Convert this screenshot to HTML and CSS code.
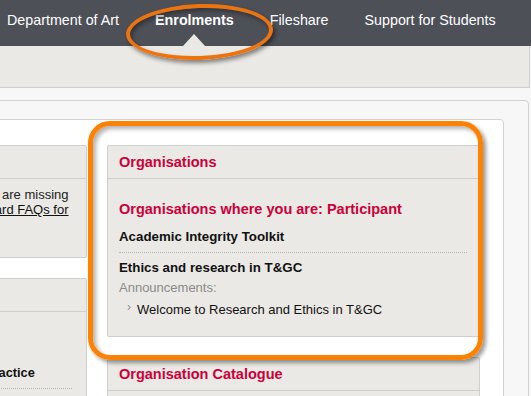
FILE: index.html
```html
<!DOCTYPE html>
<html lang="en">
<head>
    <meta charset="UTF-8">
    <meta name="viewport" content="width=device-width, initial-scale=1.0">
    <title>Enrolments</title>
    <link rel="stylesheet" href="styles.css">
</head>
<body>

    <div class="topnav">
        <a class="nav-item">Department of Art</a>
        <a class="nav-item active">Enrolments</a>
        <a class="nav-item">Fileshare</a>
        <a class="nav-item">Support for Students</a>
    </div>

    <div class="band"></div>

    <div class="main">
        <div class="content">
            <div class="col">
                <div class="card">
                    <div class="card-head"><h2>Notices</h2></div>
                    <div class="card-body notice">
                        your courses are missing<br>
                        see <a href="#">Blackboard FAQs for</a><br>
                        <a href="#">help</a>
                    </div>
                </div>
                <div class="card">
                    <div class="card-head"><h2>Modules</h2></div>
                    <div class="card-body courses">
                        <h3>Courses</h3>
                        <ul class="org-list">
                            <li><strong>Academic Practice</strong></li>
                            <li><strong>Induction</strong></li>
                        </ul>
                    </div>
                </div>
            </div>

            <div class="col">
                <div class="card">
                    <div class="card-head"><h2>Organisations</h2></div>
                    <div class="card-body">
                        <h3>Organisations where you are: Participant</h3>
                        <ul class="org-list">
                            <li><strong>Academic Integrity Toolkit</strong></li>
                            <li>
                                <strong>Ethics and research in T&amp;GC</strong>
                                <div class="ann-label">Announcements:</div>
                                <ul class="ann-list">
                                    <li>Welcome to Research and Ethics in T&amp;GC</li>
                                </ul>
                            </li>
                        </ul>
                    </div>
                </div>
                <div class="card">
                    <div class="card-head"><h2>Organisation Catalogue</h2></div>
                    <div class="card-body">
                        <ul class="org-list">
                            <li><strong>Browse</strong></li>
                        </ul>
                    </div>
                </div>
            </div>
        </div>
    </div>

    <!-- callouts drawn over the screenshot -->
    <div class="ring"></div>
    <div class="callout"></div>

</body>
</html>
```

FILE: styles.css
```css
/* page */
* {
    box-sizing: border-box;
}

body {
    margin: 0;
    background: #f7f7f7;
    font-family: "Liberation Sans", Arial, sans-serif;
    font-size: 13px;
    color: #111;
    overflow: hidden;
    height: 396px;
    position: relative;
}

/* top navigation */
.topnav {
    display: flex;
    gap: 36px;
    height: 46px;
    padding-left: 7px;
    background: #4e5058;
}

.nav-item {
    position: relative;
    color: #fff;
    font-size: 14.3px;
    line-height: 40px;
    text-decoration: none;
    white-space: nowrap;
}

.nav-item.active {
    font-weight: bold;
}

/* little notch under the active tab */
.nav-item.active::after {
    content: "";
    position: absolute;
    left: 50%;
    top: 34px;
    margin-left: -11px;
    border-left: 11px solid transparent;
    border-right: 11px solid transparent;
    border-bottom: 12px solid #ebe9e5;
}

.band {
    width: 530px;
    height: 42px;
    background: #ebe9e5;
    border-right: 1px solid #cfcfcf;
    border-bottom: 1px solid #cfcfcf;
}

/* content panels */
.main {
    width: 639px;
    margin: 12px 0 0 -110px;
    padding: 18px 24px 0 0;
    background: #f7f7f7;
    border: 1px solid #d2d2d2;
    border-radius: 0 4px 0 0;
}

.content {
    display: grid;
    grid-template-columns: minmax(0, 1fr) 373px;
    gap: 20px;
    min-height: 320px;
    padding: 25px 23px 0 20px;
    background: #fff;
    border: 1px solid #d2d2d2;
    border-radius: 0 4px 0 0;
}

.col {
    min-width: 0;
}

.card {
    background: #ebe9e5;
    border: 1px solid #cfcfcf;
    border-radius: 2px;
    margin-bottom: 20px;
    overflow: hidden;
}

.card-head {
    padding: 6px 11px;
    border-bottom: 1px solid #cfcfcf;
}

h2, h3 {
    margin: 0;
    font-size: 14.5px;
    line-height: 20px;
    color: #c9003a;
    white-space: nowrap;
}

.card-body {
    padding: 20px 12px 11px 11px;
}

.card-body h3 {
    margin-bottom: 3px;
}

.notice {
    padding: 8px 12px 25px 11px;
    line-height: 15px;
    color: #222;
    white-space: nowrap;
}

.notice a {
    color: #111;
}

.courses {
    padding: 23px 14px 11px 8px;
}

.org-list {
    list-style: none;
    margin: 0;
    padding: 0;
}

.org-list > li {
    padding: 5px 0;
    line-height: 20px;
    white-space: nowrap;
}

.org-list strong {
    font-size: 13.3px;
}

.courses .org-list strong {
    font-size: 12.8px;
}

.org-list > li + li {
    border-top: 1px dotted #b5b5b5;
}

.ann-label {
    color: #8a8a8a;
}

.ann-list {
    list-style: none;
    margin: 2px 0 0;
    padding-left: 8px;
}

.ann-list li {
    display: flex;
}

.ann-list li::before {
    content: "\203A";
    width: 10px;
    margin-top: -3px;
    color: #8f8f8f;
    font-size: 12px;
}

/* orange callouts */
.ring {
    position: absolute;
    left: 126px;
    top: 4px;
    width: 147px;
    height: 56px;
    border: 4px solid #ec7410;
    border-radius: 50%;
    transform: rotate(-2deg);
    box-shadow: 2px 3px 4px rgba(0, 0, 0, 0.45), inset 2px 3px 4px rgba(0, 0, 0, 0.35);
}

.callout {
    position: absolute;
    left: 88px;
    top: 121px;
    width: 395px;
    height: 239px;
    border: 5px solid #ff8100;
    border-radius: 22px;
    box-shadow: 3px 3px 4px rgba(0, 0, 0, 0.4), inset 3px 3px 4px rgba(0, 0, 0, 0.3);
}
```
